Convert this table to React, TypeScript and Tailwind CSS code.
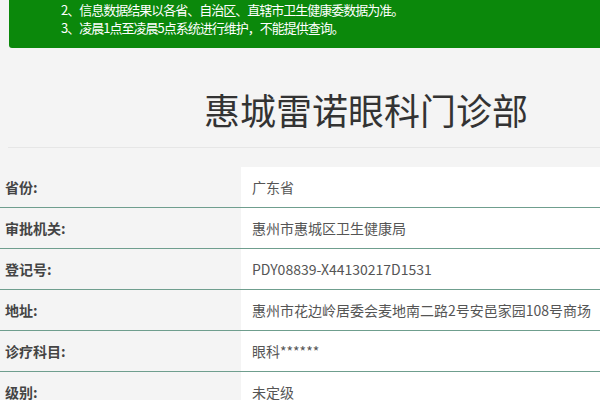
const rows = [
  { label: "省份:", value: "广东省" },
  { label: "审批机关:", value: "惠州市惠城区卫生健康局" },
  { label: "登记号:", value: "PDY08839-X44130217D1531" },
  { label: "地址:", value: "惠州市花边岭居委会麦地南二路2号安邑家园108号商场" },
  { label: "诊疗科目:", value: "眼科******" },
  { label: "级别:", value: "未定级" },
];

export default function App() {
  return (
    <div
      className="w-[600px] h-[400px] overflow-hidden bg-[#f4f4f4]"
      style={{ fontFamily: '"Noto Sans CJK SC", "Microsoft YaHei", sans-serif' }}
    >
      {/* Notice banner */}
      <div className="ml-[9px] h-[48px] rounded-bl-[3px] bg-[#0b880b] pl-[52px] pt-[1px] text-[13px] leading-[18px] tracking-[-1px] text-white">
        <p>2、信息数据结果以各省、自治区、直辖市卫生健康委数据为准。</p>
        <p>3、凌晨1点至凌晨5点系统进行维护，不能提供查询。</p>
      </div>

      {/* Title */}
      <div className="ml-[8px] flex h-[100px] items-center justify-center border-b border-[#e6e6e6] pl-[124px] pt-[22px]">
        <h1 className="text-[36px] font-normal leading-none text-[#333]">
          惠城雷诺眼科门诊部
        </h1>
      </div>

      {/* Info table */}
      <div className="mt-[19px]">
        {rows.map((row) => (
          <div key={row.label} className="flex h-[41px] border-b border-[#6f9e8e]">
            <div className="flex w-[241px] items-center pl-[5px] text-[14px] font-bold text-[#444]">
              {row.label}
            </div>
            <div className="flex flex-1 items-center bg-white pl-[11px] text-[14px] text-[#555]">
              {row.value}
            </div>
          </div>
        ))}
      </div>
    </div>
  );
}
